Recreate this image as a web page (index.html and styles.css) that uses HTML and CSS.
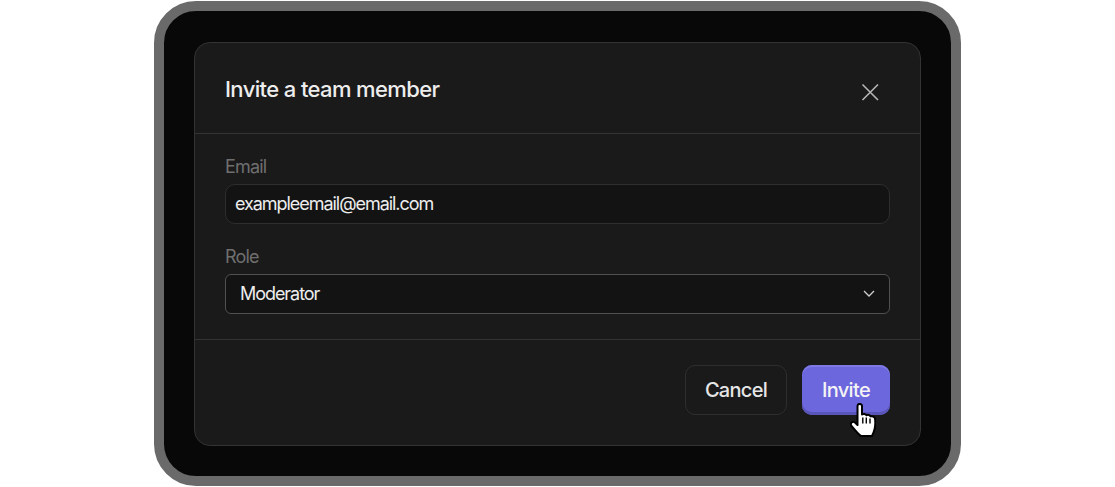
FILE: index.html
```html
<!DOCTYPE html>
<html lang="en">
<head>
<meta charset="utf-8">
<title>Invite a team member</title>
<link rel="stylesheet" href="styles.css">
</head>
<body>
<main class="frame">
  <section class="modal">
    <header class="modal-head">
      <h1 class="title">Invite a team member</h1>
      <button class="close" aria-label="Close">
        <svg width="20" height="20" viewBox="0 0 20 20" fill="none"><path d="M2.500 2.500 18 18M18 2.500 2.500 18" stroke="#b4b4b4" stroke-width="1.600"/></svg>
      </button>
    </header>
    <div class="modal-body">
      <div class="field field-email">
        <label class="label">Email</label>
        <div class="input">exampleemail@email.com</div>
      </div>
      <div class="field">
        <label class="label">Role</label>
        <div class="select">
          <span>Moderator</span>
          <svg width="12" height="7" viewBox="0 0 12 7" fill="none"><path d="M1 1l5 5 5-5" stroke="#d0d0d0" stroke-width="1.300"/></svg>
        </div>
      </div>
    </div>
    <footer class="modal-foot">
      <button class="btn btn-cancel">Cancel</button>
      <button class="btn btn-invite">Invite
        <svg class="cursor" width="26" height="35" viewBox="0 0 26 35"><path d="M7.500 3c0-2.800 4.500-2.800 4.500 0V11.500c1.500-1 3.800-.8 4.300.8 1.500-.8 3.700-.5 4.200 1.100 1.700-.5 4 .4 4.500 2.100.5 3 .3 7-.4 10.500-.5 2.500-1.600 5-2.600 7H11c-2.500-1.300-6-6-9.500-10C-.5 20.500 2.500 17.500 5 19.500L7.500 22Z" fill="#fff" stroke="#000" stroke-width="2" stroke-linejoin="round"/><path d="M12.800 14.500v6M16.300 14.500v6M20 15.500v5" stroke="#000" stroke-width="1.400"/></svg>
      </button>
    </footer>
  </section>
</main>
</body>
</html>
```
FILE: styles.css
```css
* { box-sizing: border-box; }
html, body { margin: 0; height: 100%; background: #fff; }
body {
  display: flex;
  justify-content: center;
  align-items: flex-start;
  padding-top: 1px;
  font-family: Inter, "Liberation Sans", sans-serif;
  overflow: hidden;
}
.frame {
  width: 807px;
  height: 485px;
  background: #080808;
  border: 10px solid #6a6a6a;
  border-radius: 42px;
  padding: 31px 30px 30px;
}
.modal {
  height: 404px;
  background: #1a1a1a;
  border: 1px solid #333;
  border-radius: 16px;
  display: flex;
  flex-direction: column;
}
.modal-head {
  height: 91px;
  flex: none;
  border-bottom: 1px solid #333;
  display: flex;
  justify-content: space-between;
  padding: 32px 40px 0 30px;
}
.title {
  margin: 0;
  font-size: 22px;
  line-height: 28px;
  font-weight: 500;
  letter-spacing: -0.62px;
  color: #ededed;
}
.close {
  width: 20px;
  height: 20px;
  padding: 0;
  margin-top: 7px;
  border: 0;
  background: none;
  display: block;
}
.modal-body {
  height: 206px;
  flex: none;
  border-bottom: 1px solid #333;
  padding: 21px 30px 0;
}
.field-email { margin-bottom: 21px; }
.label {
  display: block;
  font-size: 18px;
  line-height: 24px;
  letter-spacing: -0.85px;
  color: #6f6f6f;
  margin-bottom: 5px;
}
.input, .select {
  font-size: 18px;
  letter-spacing: -1.05px;
  color: #ededed;
  background: #131313;
  display: flex;
  align-items: center;
}
.input {
  height: 40px;
  border: 1px solid #2e2e2e;
  border-radius: 10px;
  padding: 0 9px 2px;
}
.select {
  height: 40px;
  border: 1px solid #505050;
  border-radius: 6px;
  padding: 0 14px 2px;
  justify-content: space-between;
}
.modal-foot {
  flex: 1;
  display: flex;
  justify-content: flex-end;
  gap: 15px;
  padding: 25px 30px 0;
}
.btn {
  height: 50px;
  font-family: inherit;
  font-size: 20px;
  font-weight: 500;
  letter-spacing: -0.7px;
  border-radius: 10px;
  padding: 0;
}
.btn-cancel {
  width: 102px;
  background: #1a1a1a;
  border: 1px solid #2e2e2e;
  color: #e6e6e6;
}
.btn-invite {
  width: 88px;
  position: relative;
  border: 0;
  background: #6d67de;
  color: #f4f4f4;
  box-shadow: inset 0 2px 0 #7f79e6, inset 0 -3px 0 #5a55b8;
}
.cursor {
  position: absolute;
  left: 48px;
  top: 38px;
}
```
